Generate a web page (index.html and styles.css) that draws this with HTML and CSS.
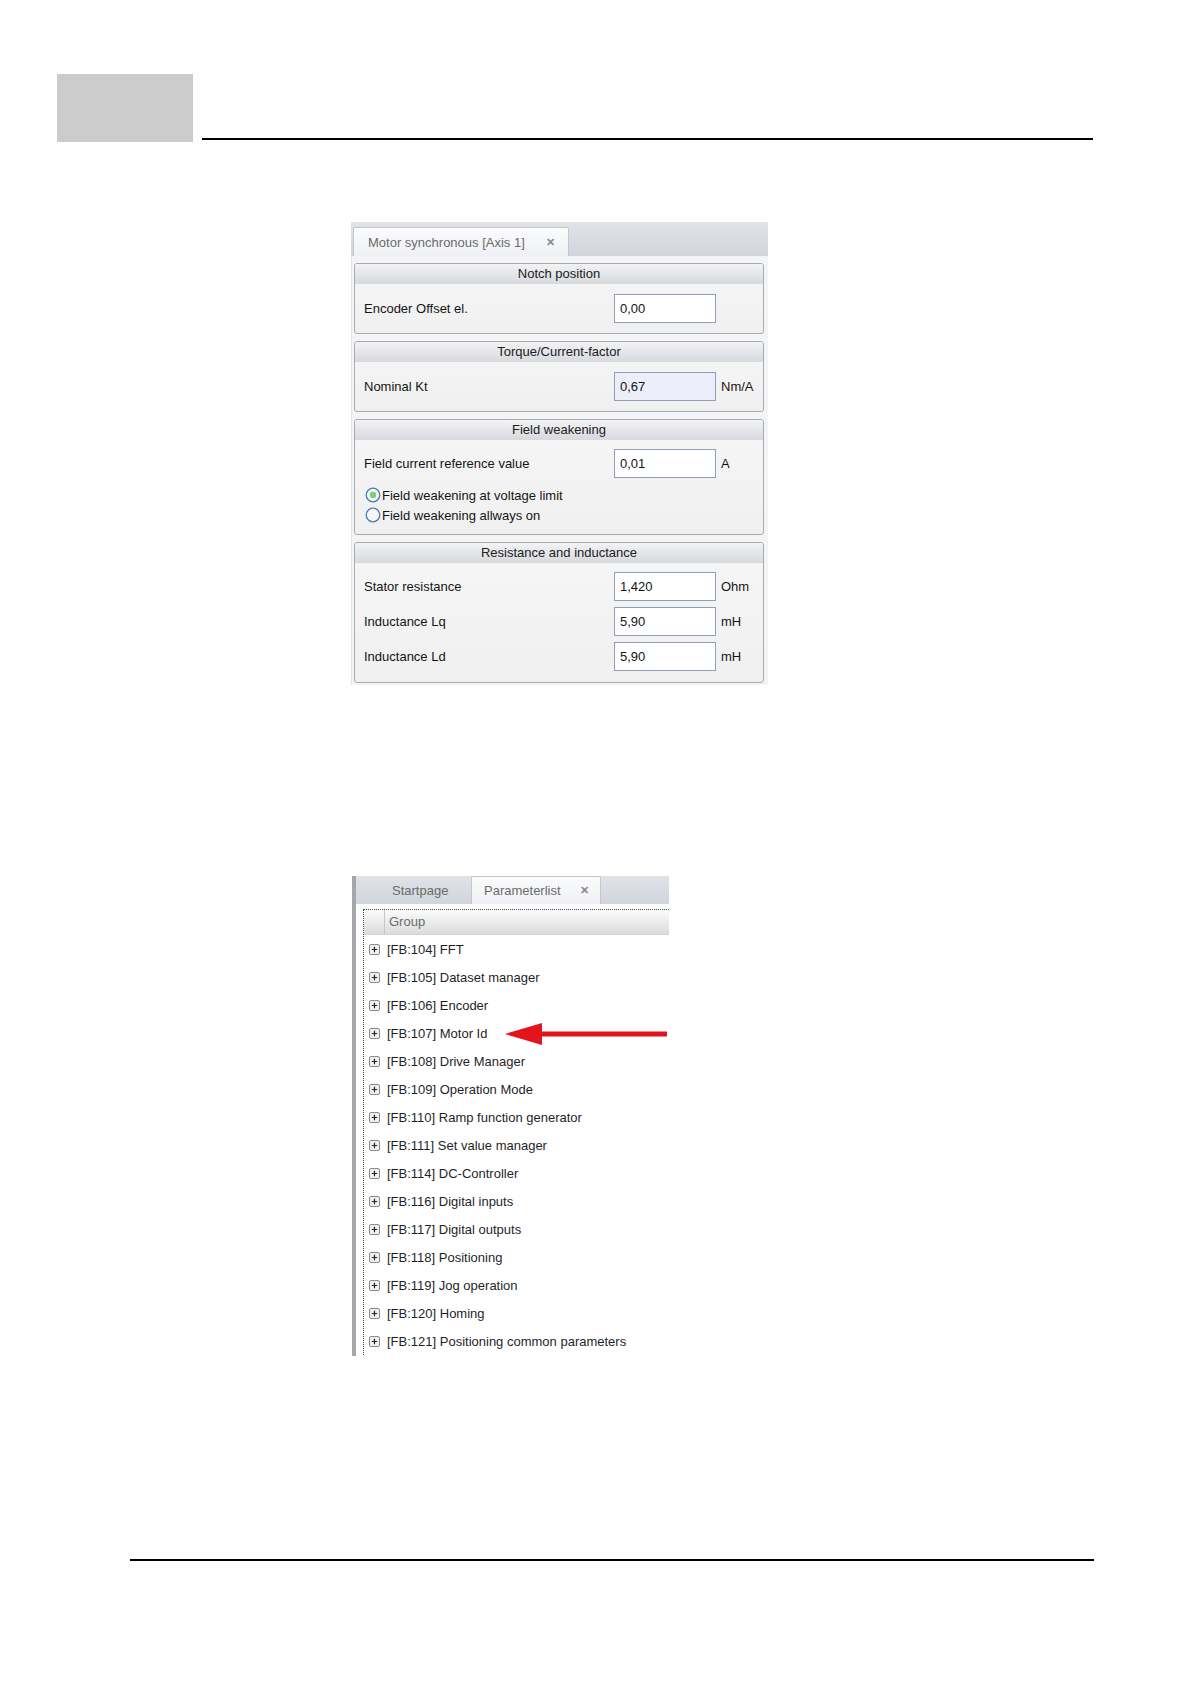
FILE: index.html
```html
<!DOCTYPE html>
<html>

<head>
    <meta charset="UTF-8" />
    <link rel="stylesheet" href="styles.css">
</head>

<body>
    <div class="page">
        <section class="page-head">
            <div class="chapter-box"></div>
            <div class="head-rule"></div>
        </section>

        <!-- screen 1: motor synchronous -->
        <div class="win win-motor">
            <div class="tabstrip">
                <div class="tab active">
                    <span class="tab-text">Motor synchronous [Axis 1]</span>
                    <span class="tab-close">&#x2715;</span>
                </div>
            </div>
            <div class="win-body">
                <div class="panel">
                    <div class="panel-head">Notch position</div>
                    <div class="panel-body">
                        <div class="row">
                            <span class="label">Encoder Offset el.</span>
                            <span class="field">0,00</span>
                            <span class="unit"></span>
                        </div>
                    </div>
                </div>
                <div class="panel">
                    <div class="panel-head">Torque/Current-factor</div>
                    <div class="panel-body">
                        <div class="row">
                            <span class="label">Nominal Kt</span>
                            <span class="field readonly">0,67</span>
                            <span class="unit">Nm/A</span>
                        </div>
                    </div>
                </div>
                <div class="panel">
                    <div class="panel-head">Field weakening</div>
                    <div class="panel-body tight">
                        <div class="row">
                            <span class="label">Field current reference value</span>
                            <span class="field">0,01</span>
                            <span class="unit">A</span>
                        </div>
                        <div class="radios">
                            <div class="radio">
                                <svg width="16" height="16" viewBox="0 0 16 16">
                                    <circle cx="8" cy="8" r="6.8" fill="#f4f6f8" stroke="#4d7cab" stroke-width="1.3"/>
                                    <circle cx="8" cy="8" r="3.2" fill="#7ccf72"/>
                                </svg>
                                <span>Field weakening at voltage limit</span>
                            </div>
                            <div class="radio">
                                <svg width="16" height="16" viewBox="0 0 16 16">
                                    <circle cx="8" cy="8" r="6.8" fill="#f4f6f8" stroke="#4d7cab" stroke-width="1.3"/>
                                </svg>
                                <span>Field weakening allways on</span>
                            </div>
                        </div>
                    </div>
                </div>
                <div class="panel">
                    <div class="panel-head">Resistance and inductance</div>
                    <div class="panel-body rows">
                        <div class="row">
                            <span class="label">Stator resistance</span>
                            <span class="field">1,420</span>
                            <span class="unit">Ohm</span>
                        </div>
                        <div class="row">
                            <span class="label">Inductance Lq</span>
                            <span class="field">5,90</span>
                            <span class="unit">mH</span>
                        </div>
                        <div class="row">
                            <span class="label">Inductance Ld</span>
                            <span class="field">5,90</span>
                            <span class="unit">mH</span>
                        </div>
                    </div>
                </div>
            </div>
        </div>

        <!-- screen 2: parameter list -->
        <div class="win win-params">
            <div class="tabstrip">
                <div class="tab">Startpage</div>
                <div class="tab active">
                    <span class="tab-text">Parameterlist</span>
                    <span class="tab-close">&#x2715;</span>
                </div>
            </div>
            <div class="list-body">
                <div class="grid">
                    <div class="grid-head">
                        <span class="grid-corner"></span>
                        <span class="grid-col">Group</span>
                    </div>
                    <div class="grid-row"><svg class="plus" width="11" height="11" viewBox="0 0 11 11"><rect x="0.5" y="0.5" width="10" height="10" rx="1.5" fill="#f0f0f0" stroke="#8a8a8a"/><path d="M2.8 5.5h5.4M5.5 2.8v5.4" stroke="#222" stroke-width="1.2"/></svg><span>[FB:104] FFT</span></div>
                    <div class="grid-row"><svg class="plus" width="11" height="11" viewBox="0 0 11 11"><rect x="0.5" y="0.5" width="10" height="10" rx="1.5" fill="#f0f0f0" stroke="#8a8a8a"/><path d="M2.8 5.5h5.4M5.5 2.8v5.4" stroke="#222" stroke-width="1.2"/></svg><span>[FB:105] Dataset manager</span></div>
                    <div class="grid-row"><svg class="plus" width="11" height="11" viewBox="0 0 11 11"><rect x="0.5" y="0.5" width="10" height="10" rx="1.5" fill="#f0f0f0" stroke="#8a8a8a"/><path d="M2.8 5.5h5.4M5.5 2.8v5.4" stroke="#222" stroke-width="1.2"/></svg><span>[FB:106] Encoder</span></div>
                    <div class="grid-row marked"><svg class="plus" width="11" height="11" viewBox="0 0 11 11"><rect x="0.5" y="0.5" width="10" height="10" rx="1.5" fill="#f0f0f0" stroke="#8a8a8a"/><path d="M2.8 5.5h5.4M5.5 2.8v5.4" stroke="#222" stroke-width="1.2"/></svg><span>[FB:107] Motor Id</span>
                        <svg class="arrow" width="162" height="24" viewBox="0 0 162 24">
                            <polygon points="0,12 37,1 37,23" fill="#e3141b"/>
                            <rect x="35" y="9.5" width="127" height="5" fill="#e3141b"/>
                        </svg>
                    </div>
                    <div class="grid-row"><svg class="plus" width="11" height="11" viewBox="0 0 11 11"><rect x="0.5" y="0.5" width="10" height="10" rx="1.5" fill="#f0f0f0" stroke="#8a8a8a"/><path d="M2.8 5.5h5.4M5.5 2.8v5.4" stroke="#222" stroke-width="1.2"/></svg><span>[FB:108] Drive Manager</span></div>
                    <div class="grid-row"><svg class="plus" width="11" height="11" viewBox="0 0 11 11"><rect x="0.5" y="0.5" width="10" height="10" rx="1.5" fill="#f0f0f0" stroke="#8a8a8a"/><path d="M2.8 5.5h5.4M5.5 2.8v5.4" stroke="#222" stroke-width="1.2"/></svg><span>[FB:109] Operation Mode</span></div>
                    <div class="grid-row"><svg class="plus" width="11" height="11" viewBox="0 0 11 11"><rect x="0.5" y="0.5" width="10" height="10" rx="1.5" fill="#f0f0f0" stroke="#8a8a8a"/><path d="M2.8 5.5h5.4M5.5 2.8v5.4" stroke="#222" stroke-width="1.2"/></svg><span>[FB:110] Ramp function generator</span></div>
                    <div class="grid-row"><svg class="plus" width="11" height="11" viewBox="0 0 11 11"><rect x="0.5" y="0.5" width="10" height="10" rx="1.5" fill="#f0f0f0" stroke="#8a8a8a"/><path d="M2.8 5.5h5.4M5.5 2.8v5.4" stroke="#222" stroke-width="1.2"/></svg><span>[FB:111] Set value manager</span></div>
                    <div class="grid-row"><svg class="plus" width="11" height="11" viewBox="0 0 11 11"><rect x="0.5" y="0.5" width="10" height="10" rx="1.5" fill="#f0f0f0" stroke="#8a8a8a"/><path d="M2.8 5.5h5.4M5.5 2.8v5.4" stroke="#222" stroke-width="1.2"/></svg><span>[FB:114] DC-Controller</span></div>
                    <div class="grid-row"><svg class="plus" width="11" height="11" viewBox="0 0 11 11"><rect x="0.5" y="0.5" width="10" height="10" rx="1.5" fill="#f0f0f0" stroke="#8a8a8a"/><path d="M2.8 5.5h5.4M5.5 2.8v5.4" stroke="#222" stroke-width="1.2"/></svg><span>[FB:116] Digital inputs</span></div>
                    <div class="grid-row"><svg class="plus" width="11" height="11" viewBox="0 0 11 11"><rect x="0.5" y="0.5" width="10" height="10" rx="1.5" fill="#f0f0f0" stroke="#8a8a8a"/><path d="M2.8 5.5h5.4M5.5 2.8v5.4" stroke="#222" stroke-width="1.2"/></svg><span>[FB:117] Digital outputs</span></div>
                    <div class="grid-row"><svg class="plus" width="11" height="11" viewBox="0 0 11 11"><rect x="0.5" y="0.5" width="10" height="10" rx="1.5" fill="#f0f0f0" stroke="#8a8a8a"/><path d="M2.8 5.5h5.4M5.5 2.8v5.4" stroke="#222" stroke-width="1.2"/></svg><span>[FB:118] Positioning</span></div>
                    <div class="grid-row"><svg class="plus" width="11" height="11" viewBox="0 0 11 11"><rect x="0.5" y="0.5" width="10" height="10" rx="1.5" fill="#f0f0f0" stroke="#8a8a8a"/><path d="M2.8 5.5h5.4M5.5 2.8v5.4" stroke="#222" stroke-width="1.2"/></svg><span>[FB:119] Jog operation</span></div>
                    <div class="grid-row"><svg class="plus" width="11" height="11" viewBox="0 0 11 11"><rect x="0.5" y="0.5" width="10" height="10" rx="1.5" fill="#f0f0f0" stroke="#8a8a8a"/><path d="M2.8 5.5h5.4M5.5 2.8v5.4" stroke="#222" stroke-width="1.2"/></svg><span>[FB:120] Homing</span></div>
                    <div class="grid-row"><svg class="plus" width="11" height="11" viewBox="0 0 11 11"><rect x="0.5" y="0.5" width="10" height="10" rx="1.5" fill="#f0f0f0" stroke="#8a8a8a"/><path d="M2.8 5.5h5.4M5.5 2.8v5.4" stroke="#222" stroke-width="1.2"/></svg><span>[FB:121] Positioning common parameters</span></div>
                </div>
            </div>
        </div>

        <div class="foot-rule"></div>
    </div>
</body>

</html>
```

FILE: styles.css
```css
html {
    background: #fff;
}

body {
    margin: 0;
    font-family: "Liberation Sans", Arial, sans-serif;
    font-size: 13px;
    color: #141414;
}

.page {
    width: 1190px;
    height: 1684px;
    overflow: hidden;
}

/* page header */
.page-head {
    display: flex;
    padding: 74px 0 0 57px;
}

.chapter-box {
    width: 136px;
    height: 68px;
    background: #cccccc;
}

.head-rule {
    width: 891px;
    margin: 0 0 2px 9px;
    align-self: flex-end;
    border-top: 2px solid #000;
}

.foot-rule {
    width: 964px;
    margin: 203px 0 0 130px;
    border-top: 2px solid #000;
}

/* windows */
.win {
    background: #fff;
}

.tabstrip {
    display: flex;
    align-items: flex-end;
    background: linear-gradient(#dfe2e7, #d2d6dc);
}

.tab {
    display: flex;
    align-items: center;
    color: #6b6b6b;
    box-sizing: border-box;
}

.tab.active {
    background: linear-gradient(#fbfbfc, #eff1f4);
    border: 1px solid #c3c7cd;
    border-bottom: none;
    border-radius: 2px 2px 0 0;
}

.tab-close {
    color: #8a8a8a;
    font-size: 11px;
    font-weight: bold;
}

/* screen 1 */
.win-motor {
    width: 417px;
    margin: 80px 0 0 351px;
}

.win-motor .tabstrip {
    height: 34px;
    padding-left: 2px;
}

.win-motor .tab.active {
    width: 216px;
    height: 29px;
    padding-left: 14px;
}

.win-motor .tab-close {
    margin-left: 21px;
}

.win-body {
    background: #f3f4f5;
    padding: 7px 4px 2px 2px;
    border-left: 1px solid #e2e2e2;
}

.panel {
    border: 1px solid #a9abae;
    border-radius: 3px;
    background: linear-gradient(#f6f6f6, #f0f0f0);
    overflow: hidden;
}

.panel + .panel {
    margin-top: 7px;
}

.panel-head {
    height: 20px;
    line-height: 20px;
    text-align: center;
    color: #202020;
    background: linear-gradient(#f3f3f4, #d6d9dd);
}

.panel-body {
    padding: 10px 0 10px 9px;
}

.panel-body.tight {
    padding-top: 9px;
    padding-bottom: 9px;
}

.panel-body.rows {
    padding-top: 9px;
    padding-bottom: 11px;
    display: flex;
    flex-direction: column;
    gap: 6px;
}

.row {
    display: grid;
    grid-template-columns: 245px 102px auto;
    column-gap: 5px;
    align-items: center;
}

.field {
    height: 29px;
    line-height: 27px;
    box-sizing: border-box;
    padding-left: 5px;
    border: 1px solid #8fa0b6;
    background: #fff;
}

.field.readonly {
    background: #eeeefa;
}

.radios {
    margin-top: 7px;
    margin-left: 1px;
}

.radio {
    display: flex;
    align-items: center;
    height: 20px;
    gap: 1px;
}

.radio svg {
    display: block;
}

/* screen 2 */
.win-params {
    width: 317px;
    height: 480px;
    margin: 191px 0 0 352px;
    border-left: 4px solid #a4a7ab;
    box-sizing: border-box;
    overflow: hidden;
}

.win-params .tabstrip {
    height: 28px;
}

.win-params .tab {
    height: 28px;
    width: 115px;
    padding-left: 36px;
}

.win-params .tab.active {
    width: 130px;
    height: 28px;
    padding-left: 12px;
}

.win-params .tab-close {
    margin-left: 19px;
}

.list-body {
    padding: 5px 0 0 7px;
    height: 447px;
}

.grid {
    height: 100%;
    border-left: 1px dotted #4a4a4a;
    border-top: 1px dotted #4a4a4a;
}

.grid-head {
    display: flex;
    height: 24px;
    background: linear-gradient(#fbfbfb, #e9eaeb 55%, #dadbdc);
    border-bottom: 1px solid #d4d4d4;
}

.grid-corner {
    width: 20px;
    border-right: 1px solid #c6c6c6;
}

.grid-col {
    padding-left: 4px;
    line-height: 24px;
    color: #6b6b6b;
}

.grid-row {
    position: relative;
    display: flex;
    align-items: center;
    gap: 7px;
    height: 28px;
    padding-left: 5px;
    color: #1f1f2a;
}

.plus {
    display: block;
}

.arrow {
    position: absolute;
    left: 141px;
    top: 3px;
}
```
